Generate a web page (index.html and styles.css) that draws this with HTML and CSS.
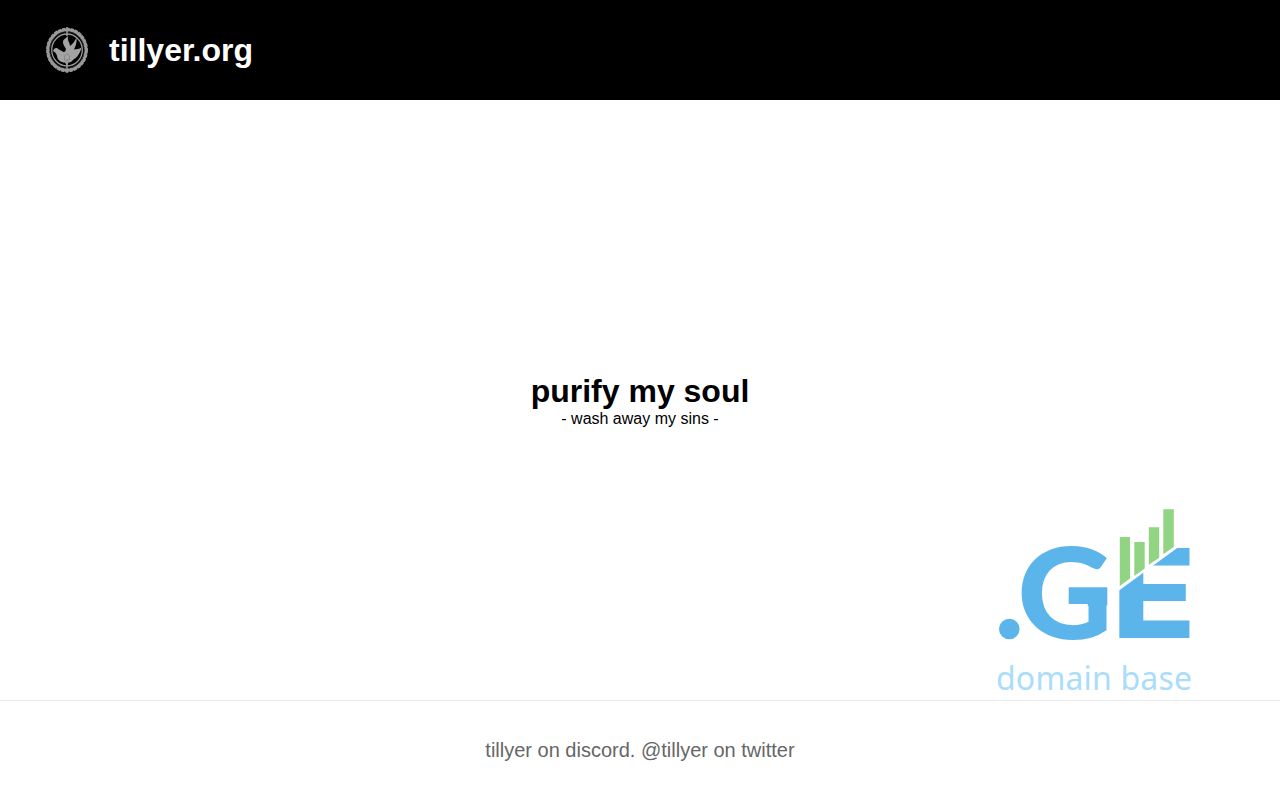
FILE: index.html
```html
<!doctype html>
<html lang="en">
<head>
  <meta charset="utf-8"/>
  <title>tillyer.org</title>
  <link rel="stylesheet" href="styles.css">
</head>
<body>
  <header class="header">
    <svg class="emblem" viewBox="0 0 54 60">
      <ellipse class="wreath" cx="27" cy="30" rx="18.700" ry="20"/>
      <ellipse class="rope" cx="27" cy="30" rx="19.700" ry="21"/>
      <ellipse class="gap" cx="27" cy="30" rx="17.300" ry="18.300"/>
      <ellipse class="ring" cx="27" cy="30" rx="15.300" ry="16"/>
      <path class="vine" d="M27 7v9M27 42v11M22 51l5-2 5 2"/>
      <path class="dove" d="M13 31c1-3.500 4-4 6-1.500l4.500 2.500c2 0 2.500-1.500 2.300-3.500-2-3-3.600-5.500-2.300-8.500l4.500-4c-.5 3 0 4.500 1.500 7.500l.5 2.500c2.500-1.500 4.500-4.500 6.500-8.500.5 4.500-.5 8-2.500 12 3-.2 5-.5 7.500-2-1.500 6-4 9.500-8 12l-2.500 2.500-2.500.5-1.500 3-2-3c-4.500 0-7.500-2.500-8-6.500-.5-2.500-1.500-3.500-4-5z"/>
      <path class="crest" d="M24.500 36c1-2.500 4-2.500 5 0v4h-5zM27 39v4"/>
    </svg>
    <h1 class="title">tillyer.org</h1>
  </header>
  <main class="main">
    <div class="hero">
      <h1 class="title">purify my soul</h1>
      <p>- wash away my sins -</p>
    </div>
    <svg class="ge-logo" viewBox="980 500 230 200">
      <defs>
        <clipPath id="slant">
          <path d="M1119 590.500L1190.500 538.200V645H1119z"/>
        </clipPath>
      </defs>
      <circle class="blue" cx="1009.300" cy="629" r="10.300"/>
      <text class="letter-g blue" transform="translate(1017.300 638.800) scale(1.053 1)">G</text>
      <!-- square crossbar of the G -->
      <rect class="blue" x="1068.700" y="587.300" width="38.600" height="18"/>
      <rect class="cut" x="1067" y="604" width="20.800" height="5"/>
      <g clip-path="url(#slant)">
        <text class="letter-e blue" transform="translate(1111.500 638.200) scale(1.120 1)">E</text>
      </g>
      <path class="bar" d="M1119.800 537h10.200v41.500l-10.200 7.500zM1134.300 542h10.400v26.500l-10.400 7.500zM1148.800 527.300h10.400v30.500l-10.400 7zM1163.300 509.300h10.500v37.500l-10.500 7.500z"/>
      <text class="tagline" x="996" y="690" textLength="196">domain base</text>
    </svg>
  </main>
  <footer class="footer">tillyer on discord. @tillyer on twitter</footer>
</body>
</html>
```
FILE: styles.css
```css
* {
  box-sizing: border-box;
  margin: 0;
  padding: 0;
}
body {
  height: 100vh;
  display: flex;
  flex-direction: column;
  font-family: "Liberation Sans", Arial, sans-serif;
  color: #000;
  background: #fff;
}
.title {
  font-size: 32px;
}
.header {
  height: 100px;
  padding-left: 40px;
  display: flex;
  align-items: center;
  gap: 15px;
  color: #fff;
  background: #000;
}
.emblem {
  width: 54px;
  height: 60px;
}
.wreath {
  fill: none;
  stroke: #999;
  stroke-width: 3;
}
.rope {
  fill: none;
  stroke: #999;
  stroke-width: 2.5;
  stroke-dasharray: 3.5 .8;
}
.gap {
  fill: none;
  stroke: #333;
  stroke-width: 1;
  stroke-dasharray: 3 1;
}
.ring {
  fill: none;
  stroke: #999;
  stroke-width: 1.3;
}
.vine {
  fill: none;
  stroke: #999;
  stroke-width: 1.5;
}
.dove {
  fill: #a3a3a3;
}
.crest {
  fill: none;
  stroke: #808080;
  stroke-width: .8;
}
.main {
  flex: 1;
  display: grid;
}
.hero {
  grid-area: 1 / 1;
  place-self: center;
  text-align: center;
}
.ge-logo {
  grid-area: 1 / 1;
  place-self: end;
  width: 230px;
  height: 200px;
  margin-right: 70px;
}
.letter-g {
  font: 900 125px Lato, sans-serif;
}
.letter-e {
  font: 800 124px Inter, sans-serif;
}
.blue {
  fill: #5bb5ea;
}
.cut {
  fill: #fff;
}
.bar {
  fill: #91d483;
}
.tagline {
  font: 400 32px "Noto Sans", "Open Sans", sans-serif;
  fill: #aadcfb;
}
.footer {
  height: 100px;
  display: flex;
  align-items: center;
  justify-content: center;
  border-top: 1px solid #eaeaea;
  font-size: 20px;
  color: #666;
}
```
